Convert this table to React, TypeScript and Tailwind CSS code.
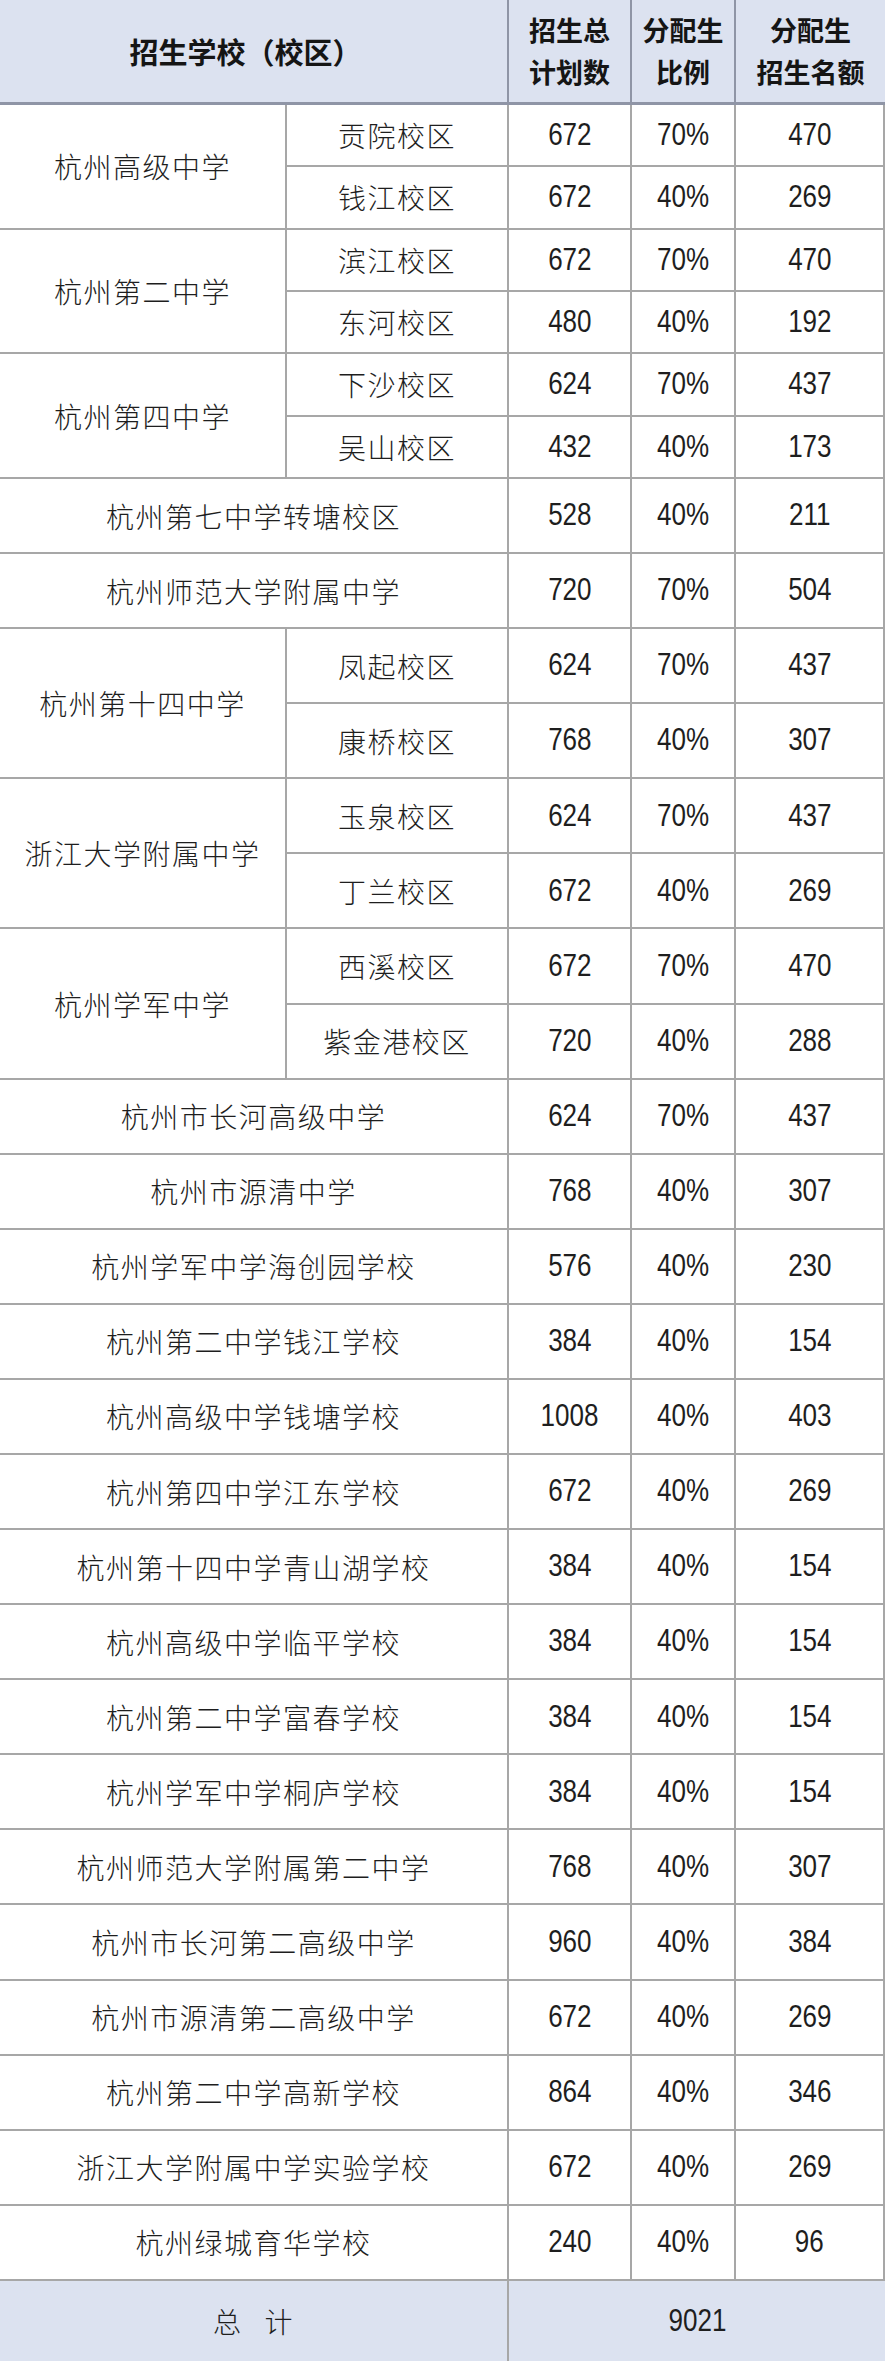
import React from 'react';

type Campus = { name: string; total: string; ratio: string; quota: string };
type Row =
  | { kind: 'group'; school: string; campuses: Campus[] }
  | { kind: 'single'; school: string; total: string; ratio: string; quota: string };

const rows: Row[] = [
  {
    kind: 'group',
    school: '杭州高级中学',
    campuses: [
      { name: '贡院校区', total: '672', ratio: '70%', quota: '470' },
      { name: '钱江校区', total: '672', ratio: '40%', quota: '269' },
    ],
  },
  {
    kind: 'group',
    school: '杭州第二中学',
    campuses: [
      { name: '滨江校区', total: '672', ratio: '70%', quota: '470' },
      { name: '东河校区', total: '480', ratio: '40%', quota: '192' },
    ],
  },
  {
    kind: 'group',
    school: '杭州第四中学',
    campuses: [
      { name: '下沙校区', total: '624', ratio: '70%', quota: '437' },
      { name: '吴山校区', total: '432', ratio: '40%', quota: '173' },
    ],
  },
  { kind: 'single', school: '杭州第七中学转塘校区', total: '528', ratio: '40%', quota: '211' },
  { kind: 'single', school: '杭州师范大学附属中学', total: '720', ratio: '70%', quota: '504' },
  {
    kind: 'group',
    school: '杭州第十四中学',
    campuses: [
      { name: '凤起校区', total: '624', ratio: '70%', quota: '437' },
      { name: '康桥校区', total: '768', ratio: '40%', quota: '307' },
    ],
  },
  {
    kind: 'group',
    school: '浙江大学附属中学',
    campuses: [
      { name: '玉泉校区', total: '624', ratio: '70%', quota: '437' },
      { name: '丁兰校区', total: '672', ratio: '40%', quota: '269' },
    ],
  },
  {
    kind: 'group',
    school: '杭州学军中学',
    campuses: [
      { name: '西溪校区', total: '672', ratio: '70%', quota: '470' },
      { name: '紫金港校区', total: '720', ratio: '40%', quota: '288' },
    ],
  },
  { kind: 'single', school: '杭州市长河高级中学', total: '624', ratio: '70%', quota: '437' },
  { kind: 'single', school: '杭州市源清中学', total: '768', ratio: '40%', quota: '307' },
  { kind: 'single', school: '杭州学军中学海创园学校', total: '576', ratio: '40%', quota: '230' },
  { kind: 'single', school: '杭州第二中学钱江学校', total: '384', ratio: '40%', quota: '154' },
  { kind: 'single', school: '杭州高级中学钱塘学校', total: '1008', ratio: '40%', quota: '403' },
  { kind: 'single', school: '杭州第四中学江东学校', total: '672', ratio: '40%', quota: '269' },
  { kind: 'single', school: '杭州第十四中学青山湖学校', total: '384', ratio: '40%', quota: '154' },
  { kind: 'single', school: '杭州高级中学临平学校', total: '384', ratio: '40%', quota: '154' },
  { kind: 'single', school: '杭州第二中学富春学校', total: '384', ratio: '40%', quota: '154' },
  { kind: 'single', school: '杭州学军中学桐庐学校', total: '384', ratio: '40%', quota: '154' },
  { kind: 'single', school: '杭州师范大学附属第二中学', total: '768', ratio: '40%', quota: '307' },
  { kind: 'single', school: '杭州市长河第二高级中学', total: '960', ratio: '40%', quota: '384' },
  { kind: 'single', school: '杭州市源清第二高级中学', total: '672', ratio: '40%', quota: '269' },
  { kind: 'single', school: '杭州第二中学高新学校', total: '864', ratio: '40%', quota: '346' },
  { kind: 'single', school: '浙江大学附属中学实验学校', total: '672', ratio: '40%', quota: '269' },
  { kind: 'single', school: '杭州绿城育华学校', total: '240', ratio: '40%', quota: '96' },
];

const cell = 'flex items-center justify-center border-b-2 border-r-2 border-[#a7a7a7]';
const cjk = "font-['Noto_Sans_CJK_SC',sans-serif] font-light text-[28px] tracking-[1.5px] text-[#1e1e1e]";
const num = "font-['Liberation_Sans',sans-serif] text-[31px] text-[#1e1e1e]";
const head = "font-['Noto_Sans_CJK_SC',sans-serif] font-bold text-[27px] leading-[42px] text-[#151515]";

// condensed figures, like the narrow face in the source sheet
function Fig({ children }: { children: React.ReactNode }) {
  return <span className="inline-block scale-x-[0.84]">{children}</span>;
}

function Numbers({ total, ratio, quota }: { total: string; ratio: string; quota: string }) {
  return (
    <>
      <div className={`${cell} ${num}`}>
        <Fig>{total}</Fig>
      </div>
      <div className={`${cell} ${num}`}>
        <Fig>{ratio}</Fig>
      </div>
      <div className={`${cell} ${num} border-r-0`}>
        <Fig>{quota}</Fig>
      </div>
    </>
  );
}

export default function App() {
  return (
    <div className="w-[885px] bg-white">
      <div className="grid grid-cols-[287px_222px_123px_104px_149px] grid-rows-[105px_repeat(6,62.33px)_repeat(24,75.08px)_80px]">
        {/* header */}
        <div className={`col-span-2 flex items-center justify-center bg-[#dce2f0] border-b-[3px] border-r-2 border-[#8f95a6] ${head} text-[29px]`}>
          <span className="pr-4">招生学校（校区）</span>
        </div>
        <div className={`flex flex-col items-center justify-center bg-[#dce2f0] border-b-[3px] border-r-2 border-[#8f95a6] ${head}`}>
          <span>招生总</span>
          <span>计划数</span>
        </div>
        <div className={`flex flex-col items-center justify-center bg-[#dce2f0] border-b-[3px] border-r-2 border-[#8f95a6] ${head}`}>
          <span>分配生</span>
          <span>比例</span>
        </div>
        <div className={`flex flex-col items-center justify-center bg-[#dce2f0] border-b-[3px] border-[#8f95a6] ${head}`}>
          <span>分配生</span>
          <span>招生名额</span>
        </div>

        {rows.map((r) =>
          r.kind === 'group' ? (
            <React.Fragment key={r.school}>
              <div className={`${cell} ${cjk} row-span-2`}>{r.school}</div>
              {r.campuses.map((c) => (
                <React.Fragment key={c.name}>
                  <div className={`${cell} ${cjk}`}>{c.name}</div>
                  <Numbers total={c.total} ratio={c.ratio} quota={c.quota} />
                </React.Fragment>
              ))}
            </React.Fragment>
          ) : (
            <React.Fragment key={r.school}>
              <div className={`${cell} ${cjk} col-span-2`}>{r.school}</div>
              <Numbers total={r.total} ratio={r.ratio} quota={r.quota} />
            </React.Fragment>
          )
        )}

        {/* total */}
        <div className={`col-span-2 flex items-center justify-center gap-[22px] bg-[#dce2f0] border-r-2 border-[#a7a7a7] ${cjk}`}>
          <span>总</span>
          <span>计</span>
        </div>
        <div className={`col-span-3 flex items-center justify-center bg-[#dce2f0] ${num}`}>
          <Fig>9021</Fig>
        </div>
      </div>
    </div>
  );
}
